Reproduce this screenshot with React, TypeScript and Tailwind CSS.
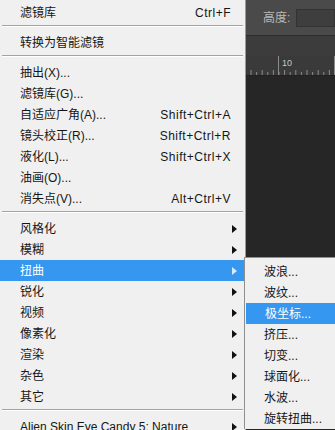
import React from "react";

type Item = { label: string; shortcut?: string; arrow?: boolean; active?: boolean } | "sep";

const MAIN: Item[] = [
  { label: "滤镜库", shortcut: "Ctrl+F" },
  "sep",
  { label: "转换为智能滤镜" },
  "sep",
  { label: "抽出(X)..." },
  { label: "滤镜库(G)..." },
  { label: "自适应广角(A)...", shortcut: "Shift+Ctrl+A" },
  { label: "镜头校正(R)...", shortcut: "Shift+Ctrl+R" },
  { label: "液化(L)...", shortcut: "Shift+Ctrl+X" },
  { label: "油画(O)..." },
  { label: "消失点(V)...", shortcut: "Alt+Ctrl+V" },
  "sep",
  { label: "风格化", arrow: true },
  { label: "模糊", arrow: true },
  { label: "扭曲", arrow: true, active: true },
  { label: "锐化", arrow: true },
  { label: "视频", arrow: true },
  { label: "像素化", arrow: true },
  { label: "渲染", arrow: true },
  { label: "杂色", arrow: true },
  { label: "其它", arrow: true },
  "sep",
  { label: "Alien Skin Eye Candy 5: Nature", arrow: true },
];

const SUB = ["波浪...", "波纹...", "极坐标...", "挤压...", "切变...", "球面化...", "水波...", "旋转扭曲..."];

function Arrow({ light }: { light?: boolean }) {
  return (
    <svg width="5" height="8" viewBox="0 0 5 8" className="-mr-[6px]">
      <path d="M0 0 L5 4 L0 8 Z" fill={light ? "#d6ecff" : "#111"} />
    </svg>
  );
}

function Ruler() {
  const ticks = [];
  for (let i = 0; i < 20; i++) {
    const x = 5 + i * 5.6;
    ticks.push(<line key={i} x1={x} x2={x} y1={i % 2 ? 16 : 14} y2={19} stroke="#8a8a8a" strokeWidth="1" />);
  }
  return (
    <svg width="89" height="20" className="block">
      {ticks}
      <line x1="32.5" x2="32.5" y1="0" y2="19" stroke="#8a8a8a" />
      <line x1="88.5" x2="88.5" y1="0" y2="19" stroke="#8a8a8a" />
      <text x="36" y="10" fontSize="9" fill="#c8c8c8" fontFamily="Liberation Sans, sans-serif">10</text>
    </svg>
  );
}

export default function App() {
  return (
    <div
      className="relative flex w-[335px] h-[430px] overflow-hidden text-[12px] text-[#161616]"
      style={{ fontFamily: '"Liberation Sans", "Noto Sans CJK SC", sans-serif' }}
    >
      <div className="w-[246px] shrink-0 bg-[#f0f0f0] border-r border-[#9a9a9a] pt-[2px]">
        {MAIN.map((it, i) =>
          it === "sep" ? (
            <div key={i} className="mx-[2px] mt-[2px] mb-[5px] border-t border-[#a3a3a3] border-b border-b-white" />
          ) : (
            <div
              key={i}
              className={`flex items-center justify-between h-[21px] pl-[20px] pr-[14px] ${
                it.active ? "bg-[#3597f0] text-white" : ""
              }`}
            >
              <span className="whitespace-nowrap">{it.label}</span>
              {it.shortcut && <span className="tracking-[0.5px]">{it.shortcut}</span>}
              {it.arrow && <Arrow light={it.active} />}
            </div>
          )
        )}
      </div>

      <div className="flex-1 flex flex-col bg-[#262626]">
        <div className="h-[36px] bg-[#4a4a4a] flex items-center pl-[17px] gap-[6px] border-b border-[#2c2c2c]">
          <span className="text-[#b9b9b9] text-[12px]">高度:</span>
          <div className="flex-1 h-[18px] bg-[#3e3e3e] border border-[#333]" />
        </div>
        <div className="h-[20px] bg-[#3c3c3c]" />
        <div className="h-[20px] bg-[#3a3a3a] border-b border-[#202020]">
          <Ruler />
        </div>
      </div>

      <div className="absolute left-[244px] top-[257px] w-[100px] bg-[#f0f0f0] border-l border-t border-[#8f8f8f] pt-[3px]">
        {SUB.map((s, i) => (
          <div
            key={s}
            className={`flex items-center h-[21px] pl-[19px] ${i === 2 ? "bg-[#3597f0] text-white ml-[1px] pl-[18px]" : ""}`}
          >
            {s}
          </div>
        ))}
      </div>
    </div>
  );
}
